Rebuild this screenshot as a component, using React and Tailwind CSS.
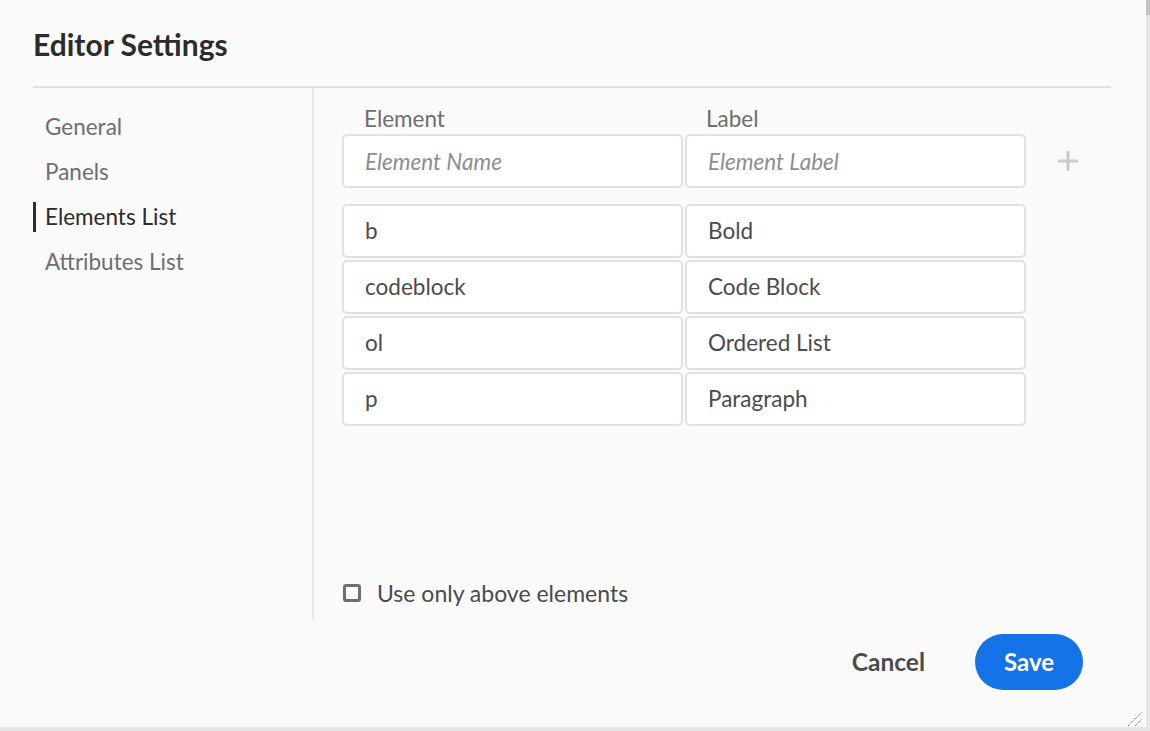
import React from 'react';

const navItems = ['General', 'Panels', 'Elements List', 'Attributes List'];

const rows = [
  { name: 'b', label: 'Bold' },
  { name: 'codeblock', label: 'Code Block' },
  { name: 'ol', label: 'Ordered List' },
  { name: 'p', label: 'Paragraph' },
];

const App = () => {
  return (
    <div className="w-[1150px] h-[731px] flex bg-[#e6e6e6] font-['Lato',sans-serif] overflow-hidden">
      <div className="w-[1146px] h-[727px] bg-[#fafafa] flex flex-col px-[33px]">
        {/* Header */}
        <div className="h-[86px] flex items-center">
          <h1 className="text-[30px] font-bold text-[#2c2c2c] pt-[2px]">Editor Settings</h1>
        </div>
        <div className="h-[2px] bg-[#e1e1e1] mr-[2px]" />

        {/* Body */}
        <div className="flex h-[532px]">
          <nav className="w-[281px] border-r-2 border-[#e8e8e8]">
            <ul className="flex flex-col pt-[16px]">
              {navItems.map((item) => (
                <li key={item} className="h-[45px] flex items-center">
                  {item === 'Elements List' ? (
                    <div className="flex items-center h-[30px] border-l-[3px] border-[#2c2c2c] pl-[9px] text-[#2c2c2c] text-[22.5px]">
                      {item}
                    </div>
                  ) : (
                    <div className="pl-[12px] text-[#6e6e6e] text-[22.5px]">{item}</div>
                  )}
                </li>
              ))}
            </ul>
          </nav>

          <div className="flex-1 pl-[28px] flex flex-col">
            <div className="flex items-end pt-[17px]">
              <div className="w-[341px] pl-[22px] text-[22.5px] text-[#6e6e6e] leading-[28px] h-[29px]">Element</div>
              <div className="w-[341px] ml-[2px] pl-[21px] text-[22.5px] text-[#6e6e6e] leading-[28px] h-[29px]">Label</div>
            </div>
            <div className="flex items-center">
              <input
                className="w-[341px] h-[54px] bg-white border-2 border-[#e1e1e1] rounded-[5px] px-[21px] text-[22.5px] italic placeholder:text-[#8e8e8e] outline-none"
                placeholder="Element Name"
              />
              <input
                className="w-[341px] h-[54px] ml-[2px] bg-white border-2 border-[#e1e1e1] rounded-[5px] px-[21px] text-[22.5px] italic placeholder:text-[#8e8e8e] outline-none"
                placeholder="Element Label"
              />
              <svg className="ml-[31px]" width="22" height="22" viewBox="0 0 22 22">
                <path d="M11 1v20M1 11h20" stroke="#cacaca" strokeWidth="3" />
              </svg>
            </div>

            <div className="flex flex-col gap-[2px] mt-[16px]">
              {rows.map((r) => (
                <div key={r.name} className="flex gap-[2px]">
                  <div className="w-[341px] h-[54px] bg-white border-2 border-[#e1e1e1] rounded-[5px] px-[21px] flex items-center text-[22.5px] text-[#4b4b4b]">
                    {r.name}
                  </div>
                  <div className="w-[341px] h-[54px] bg-white border-2 border-[#e1e1e1] rounded-[5px] px-[21px] flex items-center text-[22.5px] text-[#4b4b4b]">
                    {r.label}
                  </div>
                </div>
              ))}
            </div>

            <label className="mt-auto mb-[10px] flex items-center gap-[16px] ml-[1px]">
              <span className="w-[18px] h-[18px] border-[3px] border-[#6e6e6e] rounded-[3px] bg-[#fafafa]" />
              <span className="text-[23px] text-[#4b4b4b]">Use only above elements</span>
            </label>
          </div>
        </div>

        {/* Footer */}
        <div className="flex-1 flex items-start justify-end pt-[14px] pr-[30px] relative">
          <button className="h-[56px] px-[14px] text-[24.5px] font-bold text-[#4b4b4b] mr-[36px]">Cancel</button>
          <button className="h-[56px] w-[108px] rounded-full bg-[#1473e6] text-white text-[24px] font-bold">Save</button>
          <svg className="absolute right-[-30px] bottom-0" width="16" height="16" viewBox="0 0 16 16">
            <path d="M1 15L15 1M8 15L15 8" stroke="#555" strokeWidth="1" strokeDasharray="1 1" />
          </svg>
        </div>
      </div>

      {/* Scrollbar strip */}
      <div className="w-[4px] h-[727px] flex flex-col">
        <div className="h-[15px] bg-[#c4c4c4]" />
        <div className="flex-1 bg-[#e6e6e6]" />
      </div>
    </div>
  );
};

export default App;
